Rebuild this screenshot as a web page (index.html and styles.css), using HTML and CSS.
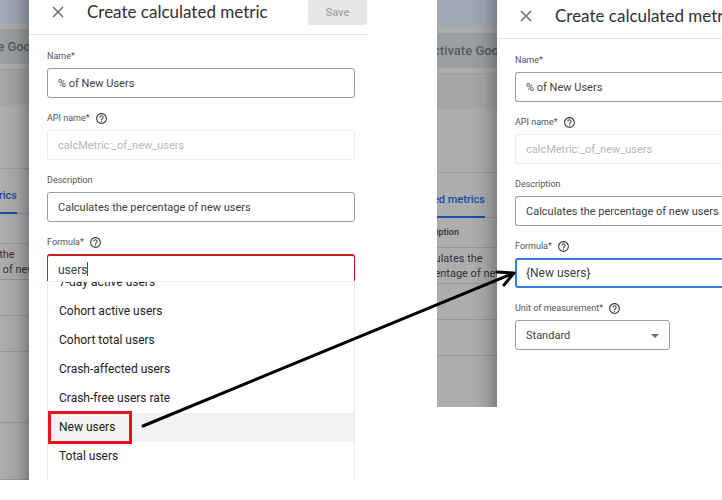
FILE: index.html
```html
<!DOCTYPE html>
<html lang="en">
<head>
<meta charset="utf-8">
<title>Create calculated metric</title>
<link rel="stylesheet" href="styles.css">
</head>
<body>
<svg class="defs" aria-hidden="true">
  <symbol id="help" viewBox="0 0 24 24"><path d="M11 18h2v-2h-2v2zm1-16C6.480 2 2 6.480 2 12s4.480 10 10 10 10-4.480 10-10S17.520 2 12 2zm0 18c-4.410 0-8-3.590-8-8s3.590-8 8-8 8 3.590 8 8-3.590 8-8 8zm0-14c-2.210 0-4 1.790-4 4h2c0-1.100.9-2 2-2s2 .9 2 2c0 2-3 1.750-3 5h2c0-2.250 3-2.500 3-5 0-2.210-1.790-4-4-4z"/></symbol>
  <symbol id="close" viewBox="0 0 12 12"><path d="M1 1L11 11M11 1L1 11" fill="none" stroke="currentColor" stroke-width="1.400"/></symbol>
</svg>
<main class="board">
  <section class="shot before">
    <div class="backdrop">
      <div class="strip"></div>
      <div class="banner"><span>Activate Goo</span></div>
      <div class="toolbar"></div>
      <div class="space"></div>
      <div class="tab"><span>Calculated metrics</span></div>
      <div class="row head"><span class="cell">Description</span></div>
      <div class="row"><span class="cell">Calculates the<br>percentage of new users</span></div>
      <div class="row"></div>
      <div class="row"></div>
      <div class="row tall"></div>
      <div class="row rest"></div>
    </div>
    <div class="panel">
      <header class="bar">
        <button class="close" aria-label="Close"><svg><use href="#close"/></svg></button>
        <h1>Create calculated metric</h1>
        <button class="save" disabled>Save</button>
      </header>
      <form class="form">
        <div class="field">
          <div class="caption"><label for="name1">Name*</label></div>
          <input id="name1" type="text" value="% of New Users">
        </div>
        <div class="field">
          <div class="caption"><label for="api1">API name*</label><svg class="help"><use href="#help"/></svg></div>
          <input id="api1" type="text" value="calcMetric:_of_new_users" disabled>
        </div>
        <div class="field">
          <div class="caption"><label for="desc1">Description</label></div>
          <input id="desc1" type="text" value="Calculates the percentage of new users">
        </div>
        <div class="field">
          <div class="caption"><label for="formula1">Formula*</label><svg class="help"><use href="#help"/></svg></div>
          <div class="entry">
            <input id="formula1" class="formula invalid" type="text" value="users">
            <span class="caret"></span>
          </div>
          <ul class="options">
            <li>7-day active users</li>
            <li>Cohort active users</li>
            <li>Cohort total users</li>
            <li>Crash-affected users</li>
            <li>Crash-free users rate</li>
            <li class="active">New users<span class="marker"></span></li>
            <li>Total users</li>
          </ul>
        </div>
      </form>
    </div>
  </section>

  <section class="shot after">
    <div class="backdrop">
      <div class="strip"></div>
      <div class="banner"><span>Activate Goo</span></div>
      <div class="toolbar"></div>
      <div class="space"></div>
      <div class="tab"><span>Calculated metrics</span></div>
      <div class="row head"><span class="cell">Description</span></div>
      <div class="row"><span class="cell">Calculates the<br>percentage of new users</span></div>
      <div class="row"></div>
      <div class="row"></div>
      <div class="row rest"></div>
    </div>
    <div class="panel">
      <header class="bar">
        <button class="close" aria-label="Close"><svg><use href="#close"/></svg></button>
        <h1>Create calculated metric</h1>
      </header>
      <form class="form">
        <div class="field">
          <div class="caption"><label for="name2">Name*</label></div>
          <input id="name2" type="text" value="% of New Users">
        </div>
        <div class="field">
          <div class="caption"><label for="api2">API name*</label><svg class="help"><use href="#help"/></svg></div>
          <input id="api2" type="text" value="calcMetric:_of_new_users" disabled>
        </div>
        <div class="field">
          <div class="caption"><label for="desc2">Description</label></div>
          <input id="desc2" type="text" value="Calculates the percentage of new users">
        </div>
        <div class="field">
          <div class="caption"><label for="formula2">Formula*</label><svg class="help"><use href="#help"/></svg></div>
          <input id="formula2" class="formula focused" type="text" value="{New users}">
        </div>
        <div class="field">
          <div class="caption"><label for="unit">Unit of measurement*</label><svg class="help"><use href="#help"/></svg></div>
          <div class="select">
            <select id="unit"><option>Standard</option></select>
            <svg class="arrow" viewBox="0 0 8 4"><path d="M0 0h8L4 4z"/></svg>
          </div>
        </div>
      </form>
    </div>
  </section>

  <svg class="pointer" viewBox="0 0 722 480" preserveAspectRatio="none" aria-hidden="true">
    <path d="M143 426L514 273M497 272L514 273L504 285"/>
  </svg>
</main>
</body>
</html>
```

FILE: styles.css
```css
* { box-sizing: border-box; }

body {
  margin: 0;
  background: #fff;
  color: #3c4043;
  font: 11px/15px Roboto, "Liberation Sans", sans-serif;
}

.defs { position: absolute; width: 0; height: 0; }

.board {
  position: relative;
  display: grid;
  grid-template-columns: 368fr 285fr;
  column-gap: 69px;
  align-items: start;
  overflow: hidden;
}

.shot { display: flex; min-width: 0; overflow: hidden; }

/* Dimmed page behind the panel */
.backdrop {
  position: relative;
  display: flex;
  flex-direction: column;
  flex: none;
  width: 29px;
  overflow: hidden;
  background: #adadad;
}
.after .backdrop { width: 60px; }
.backdrop::after {
  content: "";
  position: absolute;
  inset: 0;
  background: linear-gradient(to left, rgba(0, 0, 0, .26), rgba(0, 0, 0, .07) 12px, transparent 26px);
}
.strip { height: 23px; background: #a2a8b7; }
.after .strip { height: 27px; }
.banner {
  display: flex;
  justify-content: flex-end;
  align-items: center;
  height: 35px;
  margin: 6px 0 5px;
  background: #9c9fa1;
  color: #595c60;
  font-size: 13px;
  font-weight: 500;
  white-space: nowrap;
}
.banner span { margin-right: -2px; }
.toolbar { height: 36px; border-top: 1px solid #a0a0a0; background: #a6a6a6; }
.space { height: 64px; border-bottom: 1px solid #9c9c9c; }
.tab {
  display: flex;
  justify-content: flex-end;
  height: 45px;
  padding-right: 12px;
  border-bottom: 1px solid #989898;
  color: #174ea6;
  font-weight: 500;
  line-height: 54px;
  white-space: nowrap;
}
.tab span { height: 45px; border-bottom: 2px solid #174ea6; }
.row {
  display: flex;
  justify-content: flex-end;
  align-items: center;
  flex: none;
  height: 36px;
  border-bottom: 1px solid #989898;
  color: #303236;
  white-space: nowrap;
}
.row.head { height: 30px; font-size: 9px; font-weight: 500; }
.row.tall { height: 71px; }
.row.rest { flex: 1; height: auto; }
.after .row.rest { border-bottom: 0; }
.cell { flex: none; width: 84px; }

/* Side panel */
.panel { flex: 1; min-width: 0; overflow: hidden; background: #fff; }
.bar {
  display: flex;
  align-items: center;
  height: 35px;
  border-bottom: 1px solid #e4e5e6;
  padding: 0 1px 11px 23px;
}
.after .bar { height: 39px; padding-bottom: 7px; }
.bar h1 {
  flex: 1;
  margin: 0 0 0 23px;
  color: #303134;
  font: 400 17px/24px Lato, Roboto, sans-serif;
  white-space: nowrap;
}
.close {
  flex: none;
  width: 12px;
  height: 12px;
  border: 0;
  padding: 0;
  background: none;
  color: #5f6368;
}
.close svg { display: block; width: 12px; height: 12px; }
.save {
  flex: none;
  align-self: flex-start;
  width: 59px;
  height: 25px;
  border: 0;
  border-radius: 0 0 3px 3px;
  padding: 0;
  background: #e6e7e7;
  color: #a6a8aa;
  font: 500 11px/22px Roboto, sans-serif;
}

.form {
  display: flex;
  flex-direction: column;
  gap: 12px;
  padding: 13px 13px 0 18px;
}
.after .form { padding-bottom: 57px; padding-right: 0; }
.caption {
  display: flex;
  align-items: center;
  gap: 5px;
  height: 16px;
  margin-bottom: 4px;
  color: #50545a;
  font-size: 9px;
}
.help { width: 13px; height: 13px; fill: #3c4043; }

input, select {
  display: block;
  width: 100%;
  height: 30px;
  border: 1px solid #9a9da3;
  border-radius: 3px;
  padding: 0 10px;
  background: #fff;
  color: #3c4043;
  font: 11px/15px Roboto, sans-serif;
  outline: 0;
}
.after input { border-right: 0; border-radius: 3px 0 0 3px; padding-right: 0; }
input:disabled { border-color: #ebecee; color: #b4b7bb; }
input.formula { font-size: 12px; }
input.invalid { border-color: #c5221f; border-top-width: 2px; }
.after input.focused { border: 2px solid #3b7ddd; border-right: 0; padding-left: 9px; }

.entry { position: relative; }
.caret { position: absolute; left: 40px; top: 8px; width: 1px; height: 14px; background: #c5221f; }

.options {
  position: relative;
  margin: -3px 0 0;
  padding: 0 0 9px;
  border: 1px solid #ecedee;
  border-bottom: 0;
  background: #fff;
  color: #202124;
  font-size: 12px;
  line-height: 29px;
  list-style: none;
  overflow: clip;
}
.options li { position: relative; padding-left: 11px; }
.options li:first-child { margin-top: -14px; }
.options .active { background: #f1f3f4; }
.marker {
  position: absolute;
  left: 0;
  top: -2px;
  width: 84px;
  height: 33px;
  border: 3px solid #e5141c;
}

.select { position: relative; width: 155px; }
select { appearance: none; }
.arrow { position: absolute; right: 11px; top: 14px; width: 8px; height: 4px; fill: #6b6f74; }

/* Arrow from the chosen option to the filled formula */
.pointer { position: absolute; inset: 0; width: 100%; height: 100%; pointer-events: none; }
.pointer path { fill: none; stroke: #000; stroke-width: 3; stroke-linecap: round; stroke-linejoin: round; }
```
